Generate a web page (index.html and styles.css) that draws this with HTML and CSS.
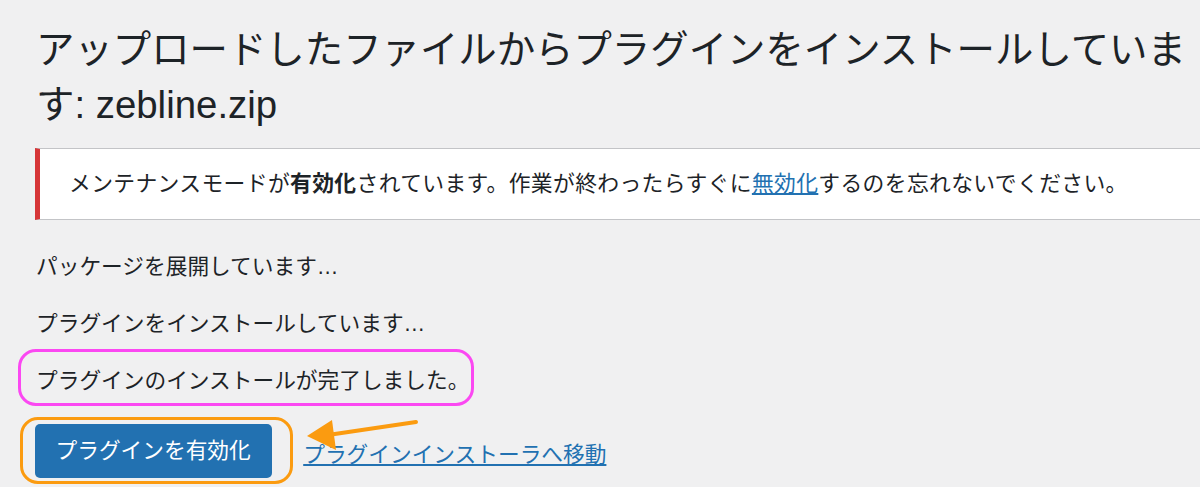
FILE: index.html
```html
<!DOCTYPE html>
<html lang="ja">
<head>
  <meta charset="utf-8">
  <title>プラグインのインストール</title>
  <link rel="stylesheet" href="styles.css">
</head>
<body>
  <div class="wrap">
    <h1>アップロードしたファイルからプラグインをインストールしています: zebline.zip</h1>

    <div class="notice">
      <p>メンテナンスモードが<strong>有効化</strong>されています。作業が終わったらすぐに<a href="#">無効化</a>するのを忘れないでください。</p>
    </div>

    <p class="step">パッケージを展開しています…</p>
    <p class="step">プラグインをインストールしています…</p>
    <p class="step"><span class="mark-pink">プラグインのインストールが完了しました。</span></p>

    <div class="actions">
      <span class="mark-orange"><a href="#" class="button-primary">プラグインを有効化</a></span>
      <a href="#" class="link">プラグインインストーラへ移動</a>
      <svg class="arrow" width="130" height="40" viewBox="0 0 130 40">
        <line x1="114" y1="7" x2="26" y2="20" stroke="#fb9b10" stroke-width="4" stroke-linecap="round"/>
        <polygon points="5,21 30,5 34,35" fill="#fb9b10"/>
      </svg>
    </div>
  </div>
</body>
</html>
```

FILE: styles.css
```css
body {
  margin: 0;
  background-color: #f0f0f1;
  color: #1d2327;
  font-family: "Liberation Sans", "Noto Sans CJK JP", sans-serif;
}
.wrap {
  padding: 0 0 0 36px;
}
h1 {
  margin: 22px 0 0 0;
  font-size: 38.4px;
  font-weight: 400;
  line-height: 55px;
}
.notice {
  margin: 16px -40px 0 -1px;
  background-color: #fff;
  border: 1px solid #c3c4c7;
  border-left: 5px solid #d63638;
  padding: 19px 0 19px 29px;
}
.notice p {
  margin: 0;
  font-size: 21.8px;
  line-height: 32px;
  letter-spacing: 0.35px;
}
.notice strong {
  font-weight: 700;
}
.notice a {
  color: #2271b1;
  text-decoration: underline;
}
.step {
  margin: 24px 0 0 0;
  font-size: 21.7px;
  line-height: 33px;
}
.notice + .step {
  margin-top: 30px;
}
.mark-pink {
  position: relative;
  display: inline-block;
}
.mark-pink::after {
  content: "";
  position: absolute;
  left: -18px;
  right: -5px;
  top: -15px;
  bottom: -9px;
  border: 3.5px solid #fb48f2;
  border-radius: 18px;
}
.actions {
  position: relative;
  display: flex;
  align-items: center;
  margin-top: 20px;
}
.mark-orange {
  display: inline-flex;
  margin-left: -16px;
  padding: 3.5px 18.5px 3.5px 11.5px;
  border: 3.5px solid #fb9b10;
  border-radius: 18px;
}
.button-primary {
  display: block;
  background-color: #2271b1;
  color: #fff;
  text-decoration: none;
  font-size: 21.7px;
  line-height: 54px;
  padding: 0 21px;
  border-radius: 5px;
}
.link {
  margin-left: 10px;
  margin-top: 4px;
  color: #2271b1;
  font-size: 21.7px;
  text-decoration: underline;
}
.arrow {
  position: absolute;
  left: 266px;
  top: -2px;
}
```
